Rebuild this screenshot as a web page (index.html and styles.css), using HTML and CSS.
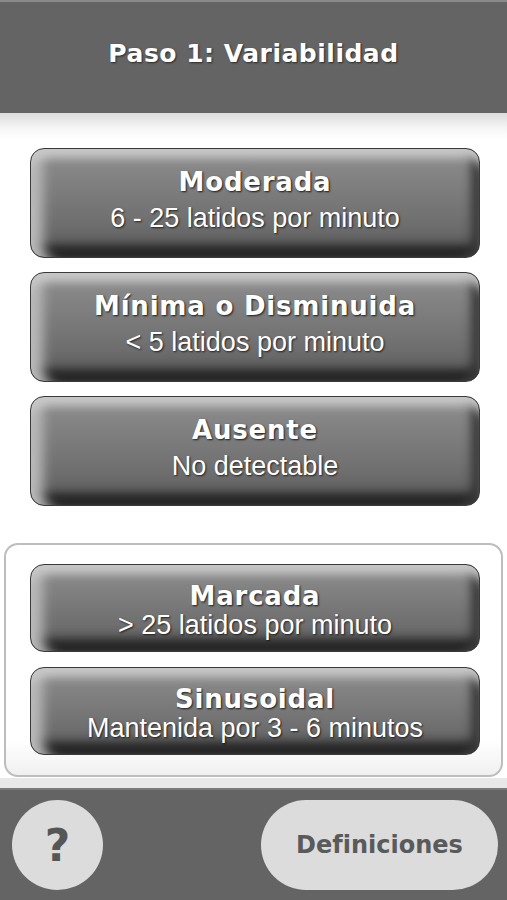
FILE: index.html
```html
<!DOCTYPE html>
<html lang="es">
<head>
<meta charset="utf-8">
<title>Paso 1: Variabilidad</title>
<link rel="stylesheet" href="styles.css">
</head>
<body>
<div class="app">
  <header class="topbar">
    <h1 class="title">Paso 1: Variabilidad</h1>
  </header>
  <main class="content">
    <div class="list">
      <button class="opt"><span class="opt-title">Moderada</span><span class="opt-sub">6 - 25 latidos por minuto</span></button>
      <button class="opt"><span class="opt-title">Mínima o Disminuida</span><span class="opt-sub">&lt; 5 latidos por minuto</span></button>
      <button class="opt"><span class="opt-title">Ausente</span><span class="opt-sub">No detectable</span></button>
    </div>
    <div class="group">
      <button class="opt compact"><span class="opt-title">Marcada</span><span class="opt-sub">&gt; 25 latidos por minuto</span></button>
      <button class="opt compact"><span class="opt-title">Sinusoidal</span><span class="opt-sub">Mantenida por 3 - 6 minutos</span></button>
    </div>
  </main>
  <footer class="bottombar">
    <button class="help">?</button>
    <button class="defs">Definiciones</button>
  </footer>
</div>
</body>
</html>
```

FILE: styles.css
```css
* { box-sizing: border-box; }
html, body { margin: 0; padding: 0; }
body {
  background: #ffffff;
  font-family: "Liberation Sans", Arial, sans-serif;
}
.app {
  width: 507px;
  height: 900px;
  display: flex;
  flex-direction: column;
  overflow: hidden;
}
.topbar {
  height: 113px;
  flex: none;
  background: #646464;
  border-top: 2px solid #8a8a8a;
  display: flex;
  align-items: center;
  justify-content: center;
}
.title {
  margin: 0 0 8px 0;
  color: #ffffff;
  font-family: "DejaVu Sans", sans-serif;
  font-weight: bold;
  font-size: 25px;
  letter-spacing: 0.5px;
  text-shadow: 1px 1px 2px rgba(0,0,0,0.6);
}
.content {
  flex: 1;
  display: flex;
  flex-direction: column;
  background: linear-gradient(#dcdcdc 0px, #f4f4f4 14px, #ffffff 26px, #ffffff 100%);
  padding-top: 35px;
}
.list {
  display: flex;
  flex-direction: column;
  gap: 14px;
  padding: 0 27px 0 30px;
}
.opt {
  height: 110px;
  width: 100%;
  border: 1px solid #3a3a3a;
  border-radius: 14px;
  padding: 0 0 8px 0;
  margin: 0;
  display: flex;
  flex-direction: column;
  align-items: center;
  justify-content: center;
  gap: 7px;
  color: #ffffff;
  background: linear-gradient(#8e8e8e 0%, #858585 20%, #6e6e6e 70%, #565656 100%);
  box-shadow:
    inset 0 15px 10px -6px #c8c8c8,
    inset 20px 0 12px -8px #b8b8b8,
    inset -14px 0 10px -6px #3a3a3a,
    inset 0 -18px 10px -6px #262626;
  cursor: pointer;
}
.opt-title {
  font-family: "DejaVu Sans", sans-serif;
  font-weight: bold;
  font-size: 26px;
  line-height: 30px;
  letter-spacing: 0.8px;
  text-shadow: 1px 1px 2px rgba(0,0,0,0.8);
}
.opt-sub {
  font-family: "Liberation Sans", Arial, sans-serif;
  font-size: 27px;
  line-height: 28px;
  text-shadow: 1px 1px 2px rgba(0,0,0,0.7);
}
.opt.compact {
  height: 88px;
  gap: 0px;
  padding: 4px 0 0 0;
}
.group {
  margin: 37px 4px 0 4px;
  border: 2px solid #bdbdbd;
  border-radius: 14px;
  background: linear-gradient(#ffffff 0%, #ffffff 85%, #f0f0f0 100%);
  padding: 19px 21px 20px 24px;
  display: flex;
  flex-direction: column;
  gap: 15px;
}
.bottombar {
  height: 112px;
  flex: none;
  background: #646464;
  border-top: 2px solid #7a7a7a;
  display: flex;
  align-items: center;
  justify-content: space-between;
  padding: 0 9px 0 12px;
  box-shadow: 0 -10px 0 #e8e8e8;
}
.help {
  width: 91px;
  height: 90px;
  border-radius: 50%;
  border: none;
  background: #dcdcdc;
  color: #565656;
  font-family: "DejaVu Sans", sans-serif;
  font-weight: bold;
  font-size: 44px;
  padding: 0;
}
.defs {
  width: 237px;
  height: 90px;
  border-radius: 45px;
  border: none;
  background: #dcdcdc;
  color: #5a5a5a;
  font-family: "DejaVu Sans", sans-serif;
  font-weight: bold;
  font-size: 24px;
  padding: 0;
}
```
